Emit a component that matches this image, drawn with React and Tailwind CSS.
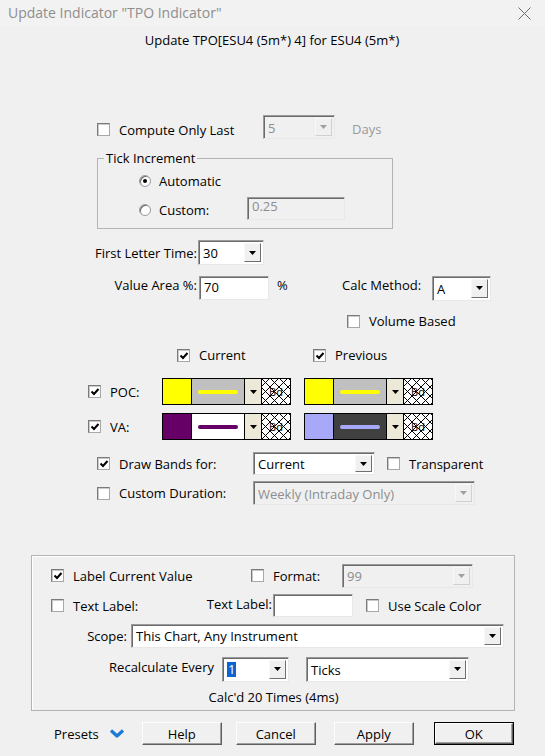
const Tri = ({ disabled }) => (
  <svg width="7" height="4" viewBox="0 0 7 4">
    <path d="M0 0 L7 0 L3.5 4 Z" fill={disabled ? "#a0a0a0" : "#000"} />
  </svg>
);

function Check({ checked }) {
  return (
    <span className="relative flex w-[13px] h-[13px] shrink-0 bg-white border border-t-[#7a7a7a] border-l-[#7a7a7a] border-b-[#a8a8a8] border-r-[#a8a8a8] shadow-[inset_1px_1px_0_#c9c9c9]">
      {checked && (
        <svg className="absolute left-[1px] top-[1px]" width="10" height="10" viewBox="0 0 10 10">
          <path d="M1.5 4.5 L4 7 L8.5 2" stroke="#000" strokeWidth="2" fill="none" />
        </svg>
      )}
    </span>
  );
}

function CheckLabel({ checked, label, className = "" }) {
  return (
    <div className={`flex items-center gap-[9px] ${className}`}>
      <Check checked={checked} />
      <span>{label}</span>
    </div>
  );
}

function Radio({ checked }) {
  return (
    <span className="relative flex items-center justify-center w-[12px] h-[12px] shrink-0 rounded-full bg-white border border-[#9a9a9a] shadow-[inset_1px_1px_0_#6a6a6a]">
      {checked && <span className="w-[4px] h-[4px] rounded-full bg-black" />}
    </span>
  );
}

function Sunken({ className = "", disabled, children }) {
  return (
    <div
      className={`flex items-stretch border border-t-[#9a9a9a] border-l-[#9a9a9a] border-b-[#e8e8e8] border-r-[#e8e8e8] shadow-[inset_1px_1px_0_#6b6b6b] ${
        disabled ? "bg-[#f0f0f0] text-[#8d8d8d]" : "bg-white text-black"
      } ${className}`}
    >
      {children}
    </div>
  );
}

function Combo({ value, className = "", disabled, selected }) {
  return (
    <Sunken className={className} disabled={disabled}>
      <span className="flex-1 flex items-center pl-[4px] pt-[1px] whitespace-nowrap overflow-hidden">
        {selected ? <span className="bg-[#0a64d2] text-white px-[1px] leading-[15px]">{value}</span> : value}
      </span>
      <span
        className={`w-[17px] my-[2px] mr-[2px] ml-[1px] flex items-center justify-center bg-[#f0f0f0] border border-t-[#f8f8f8] border-l-[#f8f8f8] ${
          disabled ? "border-b-[#d0d0d0] border-r-[#d0d0d0]" : "border-b-[#6f6f6f] border-r-[#6f6f6f]"
        }`}
      >
        <Tri disabled={disabled} />
      </span>
    </Sunken>
  );
}

function Hatch() {
  return (
    <span className="relative w-[28px] h-full bg-white overflow-hidden flex items-center justify-center">
      <svg className="absolute inset-0" width="28" height="25" viewBox="0 0 28 25">
        {[-27, -18, -9, 0, 9, 18, 27].map((o) => (
          <g key={o}>
            <line x1={o} y1="0" x2={o + 25} y2="25" stroke="#000" strokeWidth="1" />
            <line x1={o + 25} y1="0" x2={o} y2="25" stroke="#000" strokeWidth="1" />
          </g>
        ))}
      </svg>
      <span className="relative text-[11px] leading-none text-black">Bd</span>
    </span>
  );
}

function Swatch({ color, bg, line, className = "" }) {
  return (
    <div className={`flex h-[27px] w-[129px] border border-black ${className}`}>
      <span className="w-[29px] h-full border-r border-black" style={{ background: color }} />
      <span className="w-[52px] h-full flex items-center justify-center" style={{ background: bg }}>
        <span className="w-[40px] h-[4px] rounded-full" style={{ background: line }} />
      </span>
      <span className="w-[18px] h-full flex items-center justify-center bg-[#ece9d8] border-l border-r border-black">
        <Tri />
      </span>
      <Hatch />
    </div>
  );
}

function Button({ label, def, className = "" }) {
  return (
    <div className={`${def ? "border border-black" : ""} ${className}`}>
      <div className="flex items-center justify-center h-full bg-[#f0f0f0] border border-t-[#fdfdfd] border-l-[#fdfdfd] border-b-[#5f5f5f] border-r-[#5f5f5f] shadow-[inset_-1px_-1px_0_#a0a0a0]">
        {label}
      </div>
    </div>
  );
}

export default function App() {
  return (
    <div className="w-[545px] h-[756px] overflow-hidden bg-[#f0f0f0] text-[13px] leading-[16px] text-black font-['Open_Sans',sans-serif]">
      {/* title bar */}
      <div className="flex items-center justify-between h-[26px] pl-[8px] pr-[14px] bg-[#f2f2f2]">
        <span className="text-[14px] text-[#8e8e8e]">Update Indicator "TPO Indicator"</span>
        <svg width="13" height="13" viewBox="0 0 13 13">
          <path d="M0.5 0.5 L12.5 12.5 M12.5 0.5 L0.5 12.5" stroke="#6a6a6a" strokeWidth="1" />
        </svg>
      </div>
      <div className="h-[28px] flex items-center justify-center pr-[1px]">
        Update TPO[ESU4 (5m*) 4] for ESU4 (5m*)
      </div>

      {/* compute only last */}
      <div className="mt-[61px] h-[24px] flex items-center">
        <CheckLabel className="ml-[97px] w-[166px] mt-[5px]" label="Compute Only Last" />
        <Combo value="5" disabled className="w-[72px] h-[24px]" />
        <span className="ml-[17px] mt-[3px] text-[#9a9a9a]">Days</span>
      </div>

      {/* tick increment */}
      <div className="relative mt-[19px] ml-[97px] w-[296px] h-[71px] border border-[#b4b4b4] pt-[12px] pl-[41px]">
        <span className="absolute -top-[9px] left-[6px] bg-[#f0f0f0] px-[2px]">Tick Increment</span>
        <div className="h-[20px] flex items-center gap-[8px]">
          <Radio checked />
          <span>Automatic</span>
        </div>
        <div className="mt-[6px] h-[23px] flex items-center">
          <div className="w-[108px] flex items-center gap-[8px] mt-[2px]">
            <Radio />
            <span>Custom:</span>
          </div>
          <Sunken disabled className="w-[98px] h-[23px] items-center pl-[4px]">
            0.25
          </Sunken>
        </div>
      </div>

      {/* first letter time */}
      <div className="mt-[11px] h-[25px] flex items-center">
        <span className="w-[197px] text-right">First Letter Time:</span>
        <Combo value="30" className="ml-[1px] w-[66px] h-[25px]" />
      </div>

      {/* value area */}
      <div className="mt-[11px] h-[24px] flex items-center">
        <span className="w-[197px] text-right -mt-[7px]">Value Area %:</span>
        <Sunken className="ml-[2px] w-[70px] h-[24px] items-center pl-[4px] pt-[2px]">70</Sunken>
        <span className="ml-[8px] w-[65px] -mt-[7px]">%</span>
        <span className="w-[90px] -mt-[7px]">Calc Method:</span>
        <Combo value="A" className="w-[59px] h-[25px]" />
      </div>

      <div className="mt-[13px] h-[16px] flex items-center">
        <CheckLabel className="ml-[347px]" label="Volume Based" />
      </div>

      <div className="mt-[18px] h-[16px] flex items-center">
        <CheckLabel className="ml-[177px] w-[136px]" checked label="Current" />
        <CheckLabel checked label="Previous" />
      </div>

      {/* POC */}
      <div className="mt-[15px] h-[27px] flex items-center">
        <CheckLabel className="ml-[88px] w-[74px] gap-[6px]" checked label="POC:" />
        <Swatch color="#ffff00" bg="#c0c0c0" line="#ffff00" />
        <Swatch className="ml-[13px]" color="#ffff00" bg="#c0c0c0" line="#ffff00" />
      </div>

      {/* VA */}
      <div className="mt-[8px] h-[27px] flex items-center">
        <CheckLabel className="ml-[88px] w-[74px] gap-[6px]" checked label="VA:" />
        <Swatch color="#660066" bg="#ffffff" line="#660066" />
        <Swatch className="ml-[13px]" color="#a8a8f8" bg="#404040" line="#a8a8f8" />
      </div>

      {/* draw bands */}
      <div className="mt-[12px] h-[23px] flex items-center">
        <CheckLabel className="ml-[97px] w-[156px]" checked label="Draw Bands for:" />
        <Combo value="Current" className="w-[122px] h-[23px]" />
        <CheckLabel className="ml-[12px]" label="Transparent" />
      </div>

      <div className="mt-[6px] h-[24px] flex items-center">
        <CheckLabel className="ml-[97px] w-[156px]" label="Custom Duration:" />
        <Combo value="Weekly (Intraday Only)" disabled className="w-[222px] h-[24px]" />
      </div>

      {/* label group */}
      <div className="mt-[50px] ml-[31px] w-[484px] h-[156px] border border-[#b4b4b4] shadow-[inset_1px_1px_0_#ffffff]">
        <div className="mt-[8px] h-[23px] flex items-center">
          <CheckLabel className="ml-[19px] w-[200px]" checked label="Label Current Value" />
          <CheckLabel className="w-[91px]" label="Format:" />
          <Combo value="99" disabled className="w-[131px] h-[24px]" />
        </div>
        <div className="mt-[7px] h-[23px] flex items-center">
          <CheckLabel className="ml-[19px] w-[151px]" label="Text Label:" />
          <span className="w-[70px] text-right -mt-[4px]">Text Label:</span>
          <Sunken className="ml-[1px] w-[80px] h-[23px]" />
          <CheckLabel className="ml-[13px]" label="Use Scale Color" />
        </div>
        <div className="mt-[7px] h-[23px] flex items-center">
          <span className="w-[95px] text-right">Scope:</span>
          <Combo value="This Chart, Any Instrument" className="ml-[4px] w-[373px] h-[24px]" />
        </div>
        <div className="mt-[10px] h-[24px] flex items-center">
          <span className="w-[182px] text-right -mt-[5px]">Recalculate Every</span>
          <Combo value="1" selected className="ml-[8px] w-[67px] h-[25px]" />
          <Combo value="Ticks" className="ml-[17px] w-[163px] h-[25px]" />
        </div>
        <div className="mt-[8px] h-[16px] text-center pl-[1px]">Calc'd 20 Times (4ms)</div>
      </div>

      {/* buttons */}
      <div className="mt-[11px] h-[23px] flex items-center">
        <span className="ml-[54px]">Presets</span>
        <svg className="ml-[10px]" width="16" height="11" viewBox="0 0 16 11">
          <path d="M2 2.5 L8 8 L14 2.5" stroke="#1c7ad4" strokeWidth="3.2" fill="none" strokeLinejoin="round" />
        </svg>
        <Button label="Help" className="ml-[17px] w-[80px] h-[23px]" />
        <Button label="Cancel" className="ml-[14px] w-[80px] h-[23px]" />
        <Button label="Apply" className="ml-[18px] w-[80px] h-[23px]" />
        <Button label="OK" def className="ml-[20px] w-[80px] h-[23px]" />
      </div>
    </div>
  );
}
